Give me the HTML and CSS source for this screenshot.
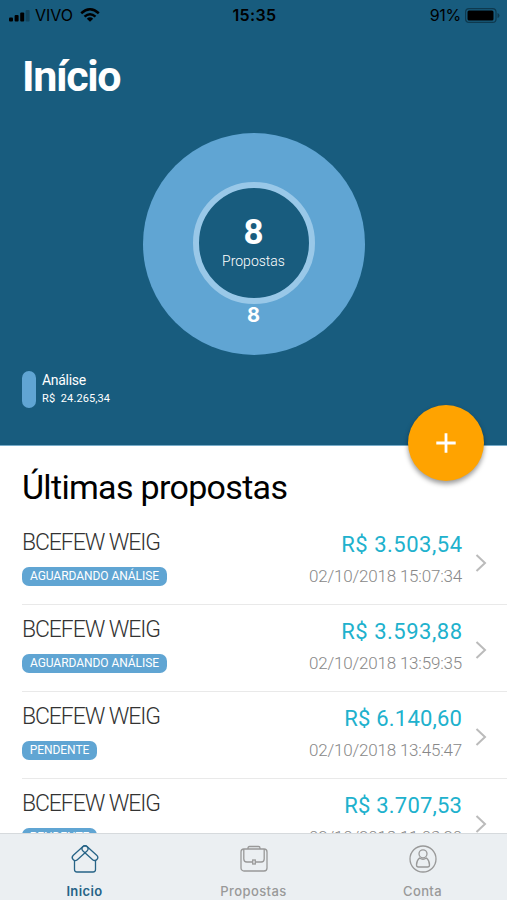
FILE: index.html
```html
<!DOCTYPE html>
<html lang="pt-BR">
<head>
<meta charset="utf-8">
<meta name="viewport" content="width=device-width, initial-scale=1">
<title>Início</title>
<link rel="stylesheet" href="styles.css">
</head>
<body>
<div class="app">
  <section class="hero">
    <div class="status">
      <div class="carrier">
        <svg width="21" height="13" viewBox="0 0 21 13"><rect x="0" y="8.500" width="4" height="4" rx="1"/><rect x="5.600" y="6" width="4" height="6.500" rx="1"/><rect x="11.200" y="3.500" width="4" height="9" rx="1"/><rect x="16.600" y="1" width="4" height="11.500" rx="1" opacity=".25"/></svg>
        <span class="operator">VIVO</span>
        <svg class="wifi" width="20" height="14" viewBox="0 0 20 14"><g fill="none" stroke="#000" stroke-width="2.500"><path d="M1.200 5.200Q10-2.600 18.800 5.200"/><path d="M4.500 8.600Q10 3.800 15.500 8.600"/></g><path d="M6.800 10.700Q10 8 13.200 10.700L10 13.700Z"/></svg>
      </div>
      <span class="clock">15:35</span>
      <div class="power"><span>91%</span><svg width="35" height="15" viewBox="0 0 35 15"><rect x=".6" y=".6" width="30.400" height="13.800" rx="3.500" fill="none" stroke="#0e394e" stroke-width="1.200"/><rect x="2.500" y="2.400" width="26" height="10.200" rx="1.500"/><path d="M32.500 5Q34.500 5.500 34.500 7.500T32.500 10Z" fill="#0e394e"/></svg></div>
    </div>
    <h1 class="title">Início</h1>
    <div class="donut">
      <div class="donut-hole"><strong class="total">8</strong><span class="caption">Propostas</span></div>
      <span class="slice">8</span>
    </div>
    <div class="legend"><i class="swatch"></i><div><div class="legend-name">Análise</div><div class="legend-value">R$&nbsp; 24.265,34</div></div></div>
    <button class="fab" aria-label="Adicionar"><svg width="20" height="20" viewBox="0 0 20 20"><path d="M10 0.300V19.700M.3 10H19.700" stroke="#fff" stroke-width="2.800"/></svg></button>
  </section>
  <main class="list">
    <h2 class="heading">Últimas propostas</h2>
    <article class="row"><div class="info"><div class="name">BCEFEW WEIG</div><span class="badge wait">AGUARDANDO ANÁLISE</span></div><div class="amounts"><div class="amount">R$ 3.503,54</div><div class="date">02/10/2018 15:07:34</div></div><svg class="chevron" width="12" height="20" viewBox="0 0 12 20"><path d="M1.500 2L10 10L1.500 18"/></svg></article>
    <article class="row"><div class="info"><div class="name">BCEFEW WEIG</div><span class="badge wait">AGUARDANDO ANÁLISE</span></div><div class="amounts"><div class="amount">R$ 3.593,88</div><div class="date">02/10/2018 13:59:35</div></div><svg class="chevron" width="12" height="20" viewBox="0 0 12 20"><path d="M1.500 2L10 10L1.500 18"/></svg></article>
    <article class="row"><div class="info"><div class="name">BCEFEW WEIG</div><span class="badge pending">PENDENTE</span></div><div class="amounts"><div class="amount narrow">R$ 6.140,60</div><div class="date">02/10/2018 13:45:47</div></div><svg class="chevron" width="12" height="20" viewBox="0 0 12 20"><path d="M1.500 2L10 10L1.500 18"/></svg></article>
    <article class="row"><div class="info"><div class="name">BCEFEW WEIG</div><span class="badge pending">PENDENTE</span></div><div class="amounts"><div class="amount narrow">R$ 3.707,53</div><div class="date">02/10/2018 11:03:20</div></div><svg class="chevron" width="12" height="20" viewBox="0 0 12 20"><path d="M1.500 2L10 10L1.500 18"/></svg></article>
  </main>
  <nav class="tabs">
    <a class="tab active"><svg width="30" height="30" viewBox="0 0 30 30"><path d="M4.500 16.500V25.500Q4.500 28 7 28H23Q25.500 28 25.500 25.500V16.500"/><rect x="-3" y="-3" width="19" height="6" rx="3" transform="translate(15 4.800) rotate(138)"/><rect x="-3" y="-3" width="19" height="6" rx="3" transform="translate(15 4.800) rotate(42)"/></svg><span>Inicio</span></a>
    <a class="tab"><svg width="30" height="30" viewBox="0 0 30 30"><rect x="2" y="5" width="26" height="22" rx="3"/><path d="M9 5V4Q9 2.500 10.500 2.500H19.500Q21 2.500 21 4V5M4.800 5V15Q4.800 18 7.800 18H13.500M16.500 18H22.200Q25.200 18 25.200 15V5"/><rect x="13.700" y="16" width="2.600" height="4"/></svg><span>Propostas</span></a>
    <a class="tab"><svg width="30" height="30" viewBox="0 0 30 30"><circle cx="15" cy="15" r="13"/><circle cx="15" cy="9.800" r="4"/><path d="M11.500 14Q8.500 16.500 8.500 21Q8.500 23 10.500 23H19.500Q21.500 23 21.500 21Q21.500 16.500 18.500 14Q15 16.500 11.500 14Z"/></svg><span>Conta</span></a>
  </nav>
</div>
</body>
</html>
```
FILE: styles.css
```css
* { box-sizing: border-box; }
body { margin: 0; font-family: Roboto, "Liberation Sans", sans-serif; }
.app { height: 900px; overflow: hidden; display: flex; flex-direction: column; background: #fff; }
.hero { position: relative; flex: none; height: 446px; background: #185c7e; color: #fff; border-bottom: 1px solid #77acc9; }
.status { height: 30px; padding: 0 7px 0 9px; display: grid; grid-template-columns: 1fr auto 1fr; align-items: center; color: #000; font: 16px Inter, sans-serif; }
.carrier, .power { display: flex; align-items: center; }
.operator { margin-left: 5px; }
.wifi { margin-left: 7px; }
.clock { font-weight: 600; letter-spacing: .4px; }
.power { justify-content: flex-end; gap: 4px; }
.power span { letter-spacing: -.3px; }
.title { margin: 18px 0 0 22px; height: 56px; font-size: 43px; line-height: 56px; font-weight: 700; letter-spacing: -1.4px; }
.donut { margin: 29px auto 0; width: 222px; height: 222px; border-radius: 50%; background: #60a5d3; display: flex; flex-direction: column; align-items: center; padding-top: 49px; }
.donut-hole { width: 122px; height: 122px; flex: none; border: 6px solid #99c8e8; border-radius: 50%; background: #185c7e; display: flex; flex-direction: column; align-items: center; padding-top: 25px; }
.total { font-size: 35px; line-height: 40px; }
.caption { font-size: 14px; line-height: 16px; font-weight: 300; }
.slice { font: 700 20px/22px Inter, sans-serif; }
.legend { margin: 16px 0 0 22px; display: flex; gap: 6px; }
.swatch { width: 14px; height: 37px; border-radius: 7px; background: #60a5d3; }
.legend-name { font-size: 14px; line-height: 19px; letter-spacing: -.3px; }
.legend-value { font-size: 11px; line-height: 17px; letter-spacing: .1px; }
.fab { position: absolute; left: 408px; top: 405px; width: 76px; height: 76px; border: 0; border-radius: 50%; background: #ffa300; box-shadow: 0 3px 5px rgba(0,0,0,.4); display: flex; align-items: center; justify-content: center; padding: 0; }
.list { flex: 1; min-height: 0; overflow: hidden; padding-left: 22px; }
.heading { margin: 0; height: 72px; padding-top: 21px; font-size: 34px; line-height: 40px; font-weight: 400; letter-spacing: -.68px; }
.row { height: 87px; display: flex; border-bottom: 1px solid #e9e9e9; }
.info { flex: 1; padding-top: 11px; }
.name { font-size: 23px; line-height: 28px; font-weight: 300; color: #333; letter-spacing: -1.1px; }
.badge { display: block; margin-top: 10px; height: 19px; border-radius: 7px; background: #60a5d3; color: #fff; font-size: 12px; line-height: 19px; text-align: center; letter-spacing: -.05px; }
.wait { width: 145px; }
.pending { width: 75px; }
.amounts { padding-top: 13px; text-align: right; }
.amount { font-size: 22px; line-height: 28px; color: #20b1cd; letter-spacing: .5px; margin-right: -.5px; }
.narrow { letter-spacing: .2px; margin-right: -.2px; }
.date { margin-top: 5px; font-size: 17px; line-height: 24px; font-weight: 300; color: #888; letter-spacing: -.2px; }
.chevron { margin: 35px 20px 0 13px; fill: none; stroke: #bbb; stroke-width: 2; }
.tabs { flex: none; height: 67px; display: grid; grid-template-columns: repeat(3, 1fr); background: #ebeff2; border-top: 1px solid #d6dadd; }
.tab { display: flex; flex-direction: column; align-items: center; padding-top: 10px; color: #999; font: 500 13px/16px Inter, sans-serif; letter-spacing: .4px; }
.tab svg { fill: none; stroke: currentColor; stroke-width: 1.3; }
.tab span { margin-top: 9px; }
.active { color: #266386; font-weight: 600; }
```
